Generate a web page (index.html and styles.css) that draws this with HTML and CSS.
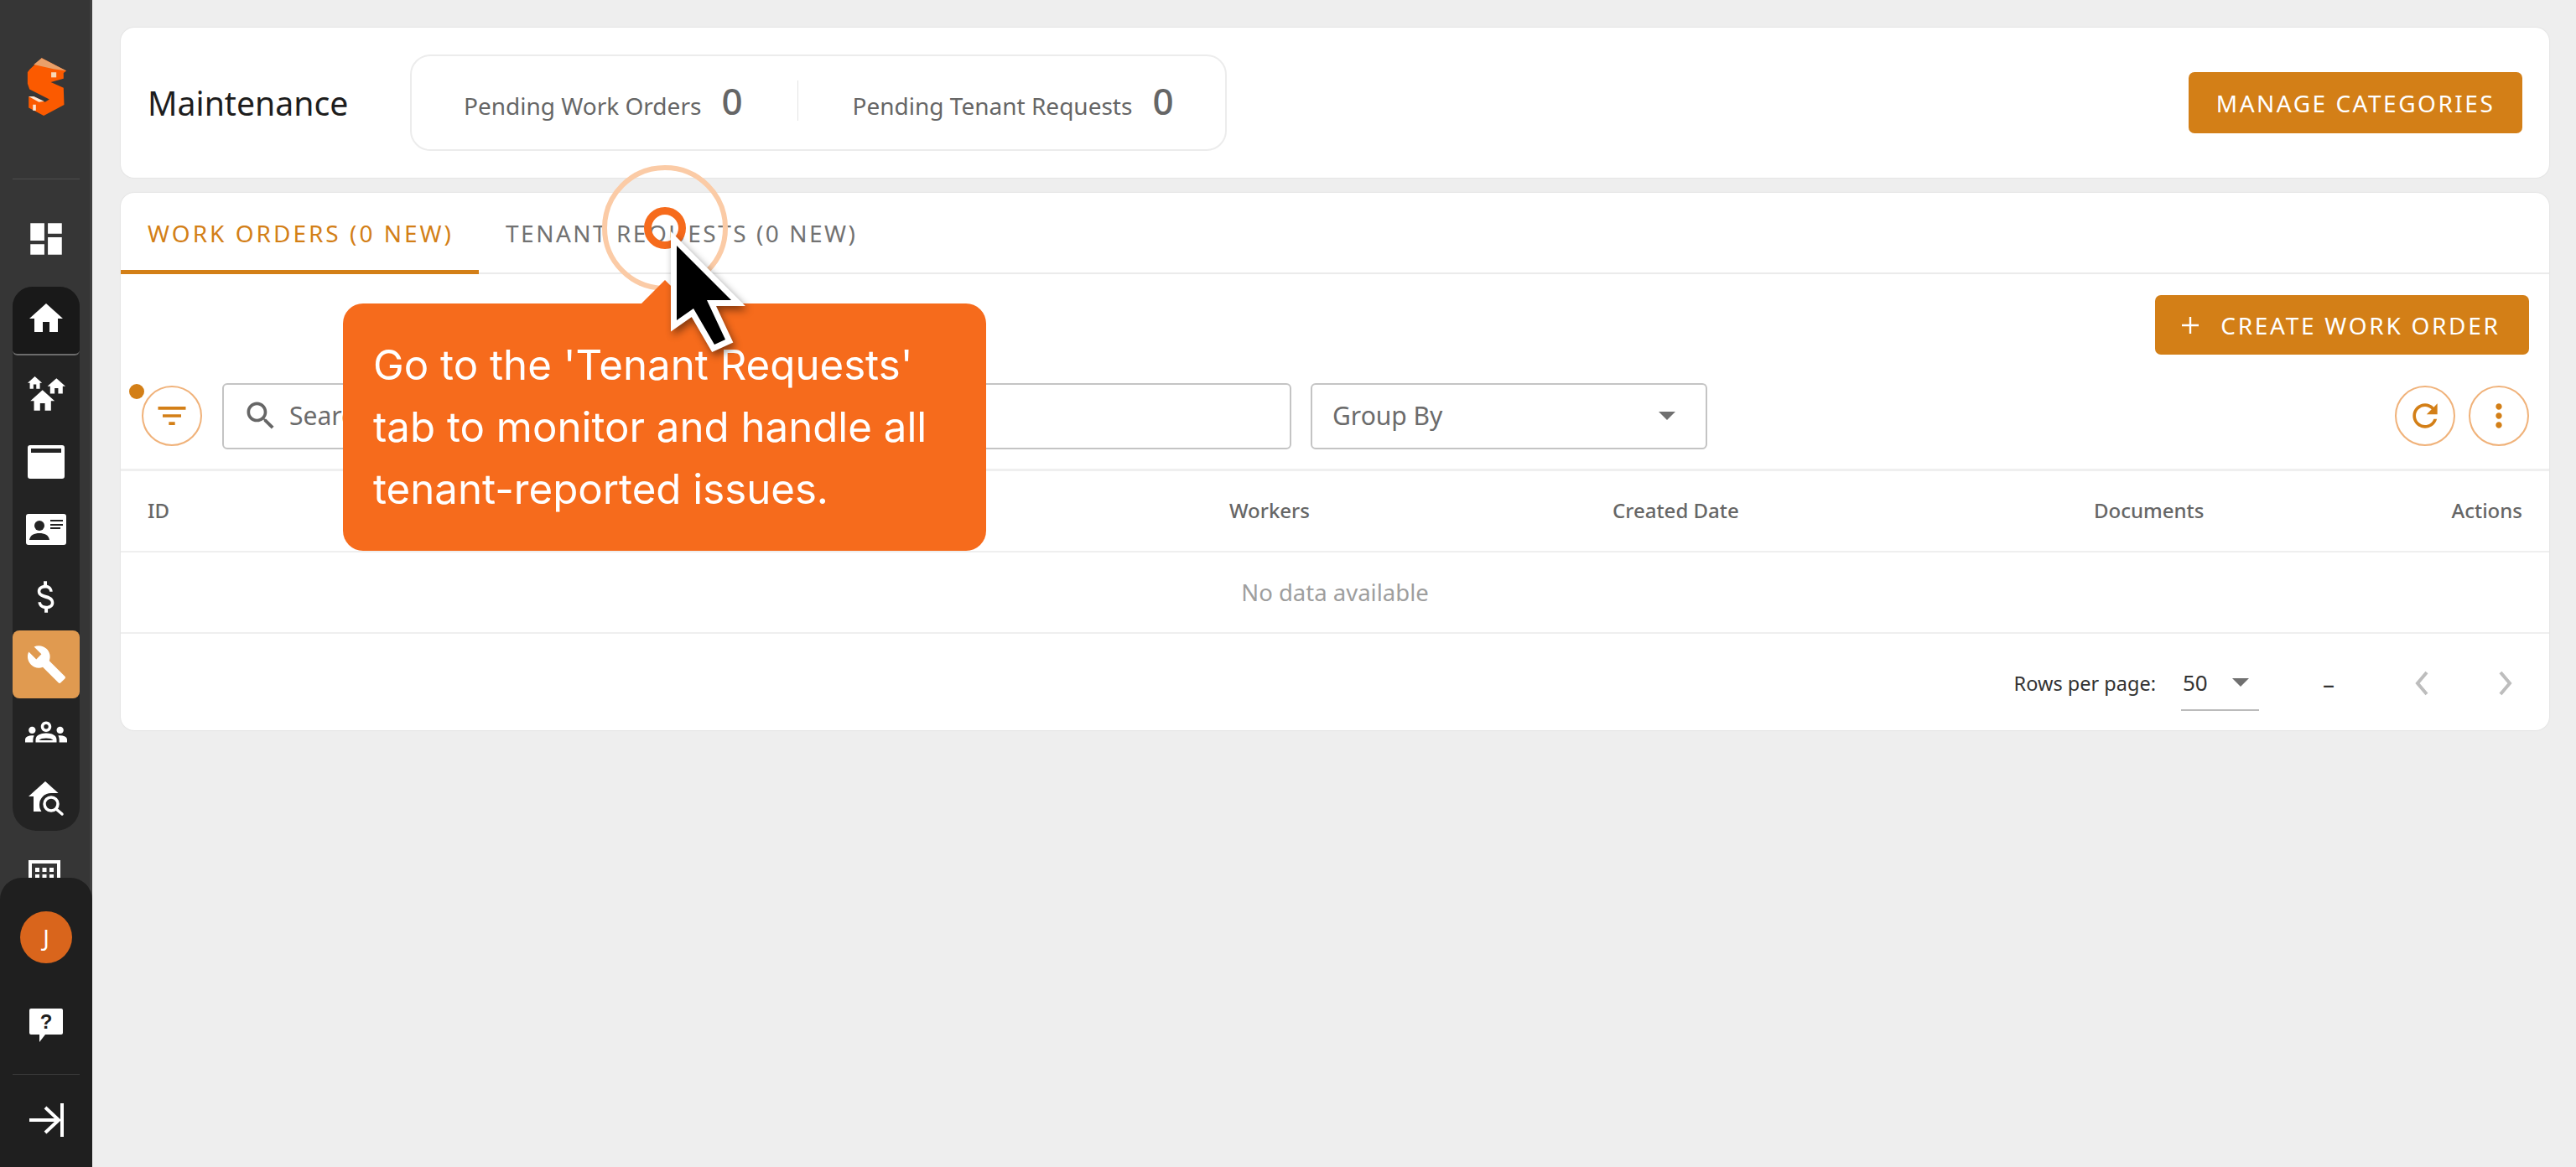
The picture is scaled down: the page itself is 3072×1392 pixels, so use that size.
FILE: index.html
```html
<!DOCTYPE html>
<html lang="en">
<head>
  <meta charset="UTF-8">
  <title>Maintenance</title>
  <link rel="stylesheet" href="styles.css">
</head>
<body>
  <div class="app">
    <aside class="sidebar">
      <div class="logo">
        <svg width="48" height="69" viewBox="0 0 47 68">
          <path fill="#fb5a00" d="M17.3 .3 L46.3 15.3 L43 17.7 V24.3 L28 28.7 L43 35.3 L43.7 55.3 L19.7 68 L2 58.7 V45.3 H8 L21.3 52 L26.3 48.7 L3 37 L.7 30.3 V17 L3 13.7 Z"/>
          <path fill="#e9a06a" d="M17.3 .3 L46.3 15.3 L31 13 L8 8 Z"/>
          <rect x="28.5" y="17" width="6" height="6" fill="#f8d9b8"/>
          <path fill="#fbe6d4" d="M2 45.3 H8 L20 51 L14 52 Z"/>
          <rect x="7" y="55" width="3.5" height="7" fill="#fbe6d4"/>
        </svg>
      </div>
      <div class="side-divider"></div>
      <div class="top-item">
        <svg class="icon" width="50" height="50" viewBox="0 0 24 24"><path d="M3 13h8V3H3v10zm0 8h8v-6H3v6zm10 0h8V11h-8v10zm0-18v6h8V3h-8z"/></svg>
      </div>
      <nav class="nav-group">
        <div class="nav-item home-item">
          <svg class="icon" width="48" height="48" viewBox="0 0 24 24"><path d="M10 20v-6h4v6h5v-8h3L12 3 2 12h3v8z"/></svg>
        </div>
        <div class="nav-list">
          <div class="nav-item">
            <svg class="icon" width="45" height="43" viewBox="0 0 42 40">
              <path transform="translate(-1.6 -2.4) scale(.8)" d="M10 20v-6h4v6h5v-8h3L12 3 2 12h3v8z"/>
              <path transform="translate(20 -1)" d="M10 20v-6h4v6h5v-8h3L12 3 2 12h3v8z"/>
              <path transform="translate(.3 10.95) scale(1.35)" d="M10 20v-6h4v6h5v-8h3L12 3 2 12h3v8z"/>
            </svg>
          </div>
          <div class="nav-item">
            <svg class="icon" width="46" height="42" viewBox="0 0 46 42"><path fill-rule="evenodd" d="M4 1 H42 Q45 1 45 4 V38 Q45 41 42 41 H4 Q1 41 1 38 V4 Q1 1 4 1 Z M5 5 V10 H41 V5 Z"/></svg>
          </div>
          <div class="nav-item">
            <svg class="icon" width="50" height="40" viewBox="0 0 50 40">
              <rect x="1" y="2" width="48" height="37" rx="3"/>
              <circle cx="17" cy="16" r="6" fill="#232323"/>
              <path fill="#232323" d="M5 33 C6 27 11 25 17 25 C23 25 28 27 29 33 Z"/>
              <path fill="none" stroke="#232323" stroke-width="2" d="M30 10 H45 M30 15 H45 M30 19 H42"/>
            </svg>
          </div>
          <div class="nav-item">
            <svg class="icon" width="50" height="50" viewBox="0 0 24 24"><path d="M11.8 10.9c-2.27-.59-3-1.2-3-2.15 0-1.09 1.01-1.85 2.7-1.85 1.78 0 2.44.85 2.5 2.1h1.7c-.07-1.72-1.12-3.3-3.21-3.81V3h-1.9v2.16c-1.94.42-3.5 1.68-3.5 3.61 0 2.31 1.91 3.46 4.7 4.13 2.5.6 3 1.48 3 2.41 0 .69-.49 1.79-2.7 1.79-2.06 0-2.87-.92-2.98-2.1h-1.7c.12 2.19 1.76 3.42 3.68 3.83V21h1.9v-2.15c1.95-.37 3.5-1.5 3.5-3.55 0-2.84-2.43-3.81-4.7-4.4z"/></svg>
          </div>
          <div class="nav-item active">
            <svg class="icon" width="49" height="49" viewBox="0 0 24 24"><path d="M22.7 19l-9.1-9.1c.9-2.3.4-5-1.5-6.9-2-2-5-2.4-7.4-1.3L9 6 6 9 1.6 4.7C.4 7.1.9 10.1 2.9 12.1c1.9 1.9 4.6 2.4 6.9 1.5l9.1 9.1c.4.4 1 .4 1.4 0l2.3-2.3c.5-.4.5-1.1.1-1.4z"/></svg>
          </div>
          <div class="nav-item">
            <svg class="icon" width="50" height="50" viewBox="0 0 24 24">
              <path d="M4 13c1.1 0 2-.9 2-2s-.9-2-2-2-2 .9-2 2 .9 2 2 2zM5.13 14.1C4.76 14.04 4.39 14 4 14c-.99 0-1.93.21-2.78.58C.48 14.9 0 15.62 0 16.43V18h4.5v-1.61c0-.83.23-1.61.63-2.29zM20 13c1.1 0 2-.9 2-2s-.9-2-2-2-2 .9-2 2 .9 2 2 2zM24 16.43c0-.81-.48-1.53-1.22-1.85C21.93 14.21 20.99 14 20 14c-.39 0-.76.04-1.13.1.4.68.63 1.46.63 2.29V18H24v-1.57zM16.24 13.65c-1.17-.52-2.61-.9-4.24-.9s-3.07.39-4.24.9C6.68 14.13 6 15.21 6 16.39V18h12v-1.61c0-1.18-.68-2.26-1.76-2.74zM12 6c1.66 0 3 1.34 3 3s-1.34 3-3 3-3-1.34-3-3 1.34-3 3-3z"/>
              <circle cx="12" cy="9" r="1.3" fill="#232323"/>
              <path fill="#232323" d="M8 16.8 C9 15.2 15 15.2 16 16.8 Z"/>
            </svg>
          </div>
          <div class="nav-item">
            <svg class="icon" width="44" height="42" viewBox="0 0 44 42">
              <path d="M21 0 L41 18 H36 V36 H7 V18 H1 Z"/>
              <circle cx="28" cy="28" r="14" fill="#232323"/>
              <path fill="#232323" d="M28 14 H44 V42 H18 V36 H28 Z"/>
              <circle cx="28" cy="27" r="8" fill="none" stroke="#fff" stroke-width="3.5"/>
              <path fill="none" stroke="#fff" stroke-width="3.5" stroke-linecap="round" d="M34 33 L41 39"/>
            </svg>
          </div>
          <div class="nav-item building-item">
            <svg class="icon" width="38" height="40" viewBox="0 0 38 40">
              <path fill-rule="evenodd" d="M0 0 H38 V40 H0 Z M4 4 V40 H34 V4 Z"/>
              <path d="M8 9h5v5H8zM16.500 9h5v5h-5zM25 9h5v5h-5zM8 17h5v5H8zM16.500 17h5v5h-5zM25 17h5v5h-5z"/>
            </svg>
          </div>
        </div>
      </nav>
      <div class="side-bottom">
        <div class="avatar">J</div>
        <svg class="icon help" width="42" height="44" viewBox="0 0 42 44">
          <path d="M3 1 H39 Q41 1 41 3 V30 Q41 32 39 32 H20 L13 41 L13 32 H3 Q1 32 1 30 V3 Q1 1 3 1 Z"/>
          <text x="21" y="25" text-anchor="middle" class="help-mark">?</text>
        </svg>
        <div class="bottom-divider"></div>
        <svg class="icon expand" width="42" height="42" viewBox="0 0 42 42">
          <path fill="none" stroke="#fff" stroke-width="4" d="M40 1 V41 M1 21 H36 M20 6 L36 21 L20 36"/>
        </svg>
      </div>
    </aside>

    <main class="content">
      <section class="card header-card">
        <h1 class="page-title">Maintenance</h1>
        <div class="stats">
          <div class="stat"><span class="stat-label">Pending Work Orders</span><span class="stat-value">0</span></div>
          <div class="stat-line"></div>
          <div class="stat"><span class="stat-label">Pending Tenant Requests</span><span class="stat-value">0</span></div>
        </div>
        <button class="btn manage-btn">MANAGE CATEGORIES</button>
      </section>

      <section class="card list-card">
        <div class="tabs">
          <div class="tab tab-active">WORK ORDERS (0 NEW)</div>
          <div class="tab">TENANT REQUESTS (0 NEW)</div>
        </div>
        <div class="create-row">
          <button class="btn create-btn">
            <svg width="24" height="24" viewBox="0 0 24 24"><path fill="none" stroke="#fff" stroke-width="2.4" d="M12 2 V22 M2 12 H22"/></svg>
            CREATE WORK ORDER
          </button>
        </div>
        <div class="filter-row">
          <div class="filter-wrap">
            <span class="filter-dot"></span>
            <button class="round-btn">
              <svg width="44" height="44" viewBox="0 0 24 24"><path d="M10 18h4v-2h-4v2zM3 6v2h18V6H3zm3 7h12v-2H6v2z"/></svg>
            </button>
          </div>
          <div class="field search-field">
            <svg width="44" height="44" viewBox="0 0 24 24"><path d="M15.5 14h-.79l-.28-.27C15.41 12.59 16 11.11 16 9.5 16 5.91 13.09 3 9.5 3S3 5.91 3 9.5 5.91 16 9.5 16c1.61 0 3.09-.59 4.23-1.57l.27.28v.79l5 4.99L20.49 19l-4.99-5zm-6 0C7.01 14 5 11.99 5 9.5S7.01 5 9.5 5 14 7.01 14 9.5 11.99 14 9.5 14z"/></svg>
            <span>Search</span>
          </div>
          <div class="field group-field">
            <span>Group By</span>
            <span class="caret"></span>
          </div>
          <div class="row-actions">
            <button class="round-btn">
              <svg width="44" height="44" viewBox="0 0 24 24"><path d="M17.65 6.35C16.2 4.9 14.21 4 12 4c-4.42 0-7.99 3.58-7.99 8s3.57 8 7.99 8c3.73 0 6.84-2.55 7.73-6h-2.08c-.82 2.33-3.04 4-5.65 4-3.31 0-6-2.69-6-6s2.69-6 6-6c1.66 0 3.14.69 4.22 1.78L13 11h7V4l-2.35 2.35z"/></svg>
            </button>
            <button class="round-btn">
              <svg width="44" height="44" viewBox="0 0 24 24"><path d="M12 8c1.1 0 2-.9 2-2s-.9-2-2-2-2 .9-2 2 .9 2 2 2zm0 2c-1.1 0-2 .9-2 2s.9 2 2 2 2-.9 2-2-.9-2-2-2zm0 6c-1.1 0-2 .9-2 2s.9 2 2 2 2-.9 2-2-.9-2-2-2z"/></svg>
            </button>
          </div>
        </div>
        <div class="table-head">
          <div>ID</div>
          <div>Workers</div>
          <div>Created Date</div>
          <div>Documents</div>
          <div class="col-right">Actions</div>
        </div>
        <div class="table-empty">No data available</div>
        <div class="pager">
          <span class="pager-label">Rows per page:</span>
          <div class="pager-select"><span>50</span><span class="caret"></span></div>
          <span class="pager-range">–</span>
          <svg class="chev" width="20" height="32" viewBox="0 0 20 32"><path fill="none" stroke="#bdbdbd" stroke-width="4" d="M16 3 L5 16 L16 29"/></svg>
          <svg class="chev" width="20" height="32" viewBox="0 0 20 32"><path fill="none" stroke="#bdbdbd" stroke-width="4" d="M4 3 L15 16 L4 29"/></svg>
        </div>
      </section>
    </main>
  </div>

  <div class="tour-ring"></div>
  <div class="tour-dot"></div>
  <div class="tour-tip">
    <span class="tour-arrow"></span>
    Go to the 'Tenant Requests' tab to monitor and handle all tenant-reported issues.
  </div>
  <svg class="tour-cursor" width="110" height="160" viewBox="0 0 110 160">
    <path class="cursor-shape" d="M17 23 L82 88 H53 L75 135 L62 141 L37 98 L17 112 Z"/>
  </svg>
</body>
</html>
```
FILE: styles.css
```css
* {
  box-sizing: border-box;
}
html, body {
  height: 100%;
}
body {
  margin: 0;
  background-color: #eeeeee;
  font-family: "Noto Sans", "Open Sans", sans-serif;
  overflow: hidden;
}
button {
  font-family: inherit;
  border: none;
  padding: 0;
}
.app {
  display: flex;
  height: 1392px;
}

/* sidebar */
.sidebar {
  position: relative;
  width: 110px;
  height: 100%;
  flex-shrink: 0;
  overflow: hidden;
  background-color: #363636;
  box-shadow: inset -3px 0 0 #3f3f3f;
}
.icon {
  fill: #fff;
  display: block;
}
.logo {
  height: 213px;
  padding: 69px 0 0 32px;
}
.side-divider {
  height: 1px;
  margin: 0 15px;
  background-color: #4d4d4d;
}
.top-item {
  height: 128px;
  padding-top: 14px;
  display: flex;
  align-items: center;
  justify-content: center;
}
.nav-group {
  width: 80px;
  margin-left: 15px;
  height: 649px;
  background-color: #232323;
  border-radius: 24px 24px 28px 28px;
}
.nav-item {
  height: 80.5px;
  display: flex;
  align-items: center;
  justify-content: center;
}
.home-item {
  height: 82px;
  padding-bottom: 4px;
  border-radius: 24px 24px 6px 6px;
  background-color: #191919;
  border-bottom: 2px solid #6c6c6c;
}
.nav-list {
  padding-top: 6px;
}
.nav-item.active {
  background-color: #e09a50;
  border-radius: 8px;
}
.building-item {
  padding: 25px 4px 0 0;
}
.side-bottom {
  position: absolute;
  left: 0;
  bottom: 0;
  width: 110px;
  height: 345px;
  display: flex;
  flex-direction: column;
  align-items: center;
  background-color: #1f1f1f;
  border-radius: 26px 26px 0 0;
}
.avatar {
  width: 62px;
  height: 62px;
  margin-top: 40px;
  border-radius: 50%;
  background-color: #d9651c;
  color: #fff;
  font-size: 28px;
  display: flex;
  align-items: center;
  justify-content: center;
}
.help {
  margin-top: 53px;
  overflow: visible;
}
.help-mark {
  fill: #1f1f1f;
  font-family: "Liberation Sans", sans-serif;
  font-weight: 700;
  font-size: 24px;
}
.bottom-divider {
  width: 80px;
  height: 1px;
  margin-top: 35px;
  background-color: #3a3a3a;
}
.expand {
  margin-top: 33px;
}

/* main */
.content {
  flex: 1;
  padding: 33px 32px 0 34px;
  min-width: 0;
}
.card {
  background-color: #fff;
  border-radius: 16px;
  box-shadow: 0 0 2px rgba(0, 0, 0, 0.12);
}
.header-card {
  height: 179px;
  padding: 0 32px;
  display: flex;
  align-items: center;
}
.page-title {
  margin: 0;
  width: 313px;
  font-size: 39.2px;
  font-weight: 400;
  color: #1d1d1d;
}
.stats {
  width: 974px;
  height: 115px;
  padding: 0 0 5px 62px;
  display: flex;
  align-items: center;
  gap: 65px;
  border: 2px solid #ececec;
  border-radius: 24px;
}
.stat {
  display: flex;
  align-items: baseline;
}
.stat-label {
  font-size: 28px;
  color: #666;
}
.stat-value {
  margin-left: 24px;
  font-size: 44px;
  font-weight: 500;
  color: #666;
}
.stat-line {
  width: 1px;
  height: 48px;
  background-color: #e4e4e4;
}
.btn {
  background-color: #d37f17;
  color: #fff;
  border-radius: 7px;
  font-size: 28px;
  letter-spacing: 2.5px;
}
.manage-btn {
  margin-left: auto;
  width: 398px;
  height: 73px;
}
.list-card {
  margin-top: 18px;
  height: 641px;
}
.tabs {
  height: 97px;
  display: flex;
  border-bottom: 2px solid #ebebeb;
}
.tab {
  height: 97px;
  padding: 0 32px;
  line-height: 96px;
  font-size: 28px;
  letter-spacing: 2.5px;
  color: #727272;
}
.tab-active {
  padding-right: 30px;
  letter-spacing: 3px;
  color: #d37f17;
  border-bottom: 5px solid #d37f17;
}
.create-row {
  display: flex;
  justify-content: flex-end;
  padding: 25px 24px 0 0;
}
.create-btn {
  width: 446px;
  height: 71px;
  padding-right: 4px;
  display: flex;
  align-items: center;
  justify-content: center;
  gap: 24px;
  letter-spacing: 2.7px;
}
.filter-row {
  height: 139px;
  padding: 37px 24px 0 25px;
  display: flex;
  align-items: flex-start;
  border-bottom: 3px solid #efefef;
}
.filter-wrap {
  position: relative;
}
.filter-dot {
  position: absolute;
  left: -15px;
  top: -2px;
  width: 18px;
  height: 18px;
  border-radius: 50%;
  background-color: #d37f17;
}
.round-btn {
  width: 72px;
  height: 72px;
  border-radius: 50%;
  background-color: #fff;
  border: 2px solid #f0b27a;
  display: flex;
  align-items: center;
  justify-content: center;
}
.round-btn svg {
  fill: #d37f17;
}
.field {
  height: 79px;
  margin-top: -3px;
  padding-bottom: 2px;
  border: 2px solid #c4c4c4;
  border-radius: 6px;
  display: flex;
  align-items: center;
  font-size: 30px;
  color: #6b6b6b;
}
.search-field {
  width: 1275px;
  margin-left: 24px;
  padding-left: 22px;
  gap: 12px;
}
.search-field svg {
  fill: #666;
}
.group-field {
  width: 473px;
  margin-left: 23px;
  padding: 0 36px 2px 24px;
  justify-content: space-between;
}
.caret {
  width: 0;
  height: 0;
  border-left: 10px solid transparent;
  border-right: 10px solid transparent;
  border-top: 10px solid #707070;
}
.row-actions {
  margin-left: auto;
  display: flex;
  gap: 16px;
}
.table-head {
  height: 97px;
  padding: 0 32px 3px;
  display: grid;
  grid-template-columns: 1290px 457px 574px 1fr auto;
  align-items: center;
  font-size: 24px;
  font-weight: 500;
  color: #666;
  border-bottom: 2px solid #efefef;
}
.col-right {
  text-align: right;
}
.table-empty {
  height: 97px;
  display: flex;
  align-items: center;
  justify-content: center;
  font-size: 27.5px;
  color: #9e9e9e;
  border-bottom: 2px solid #efefef;
}
.pager {
  height: 117px;
  padding-right: 42px;
  display: flex;
  align-items: center;
  justify-content: flex-end;
  font-size: 23.5px;
  color: #333;
}
.pager-select {
  width: 93px;
  height: 66px;
  margin-left: 30px;
  padding: 0 12px 0 2px;
  display: flex;
  align-items: center;
  justify-content: space-between;
  border-bottom: 2px solid #bbb;
  font-size: 26px;
}
.pager-range {
  margin-left: 76px;
  margin-right: 94px;
  font-size: 28px;
}
.chev + .chev {
  margin-left: 80px;
}

/* tour overlay */
.tour-ring {
  position: absolute;
  left: 718px;
  top: 197px;
  width: 150px;
  height: 150px;
  border: 6px solid #fbcba6;
  border-radius: 50%;
}
.tour-dot {
  position: absolute;
  left: 768px;
  top: 247px;
  width: 50px;
  height: 50px;
  border: 9px solid #f66b1c;
  border-radius: 50%;
}
.tour-tip {
  position: absolute;
  left: 409px;
  top: 362px;
  width: 767px;
  height: 295px;
  padding: 36px 36px 0;
  background-color: #f66b1c;
  border-radius: 24px;
  color: #fff;
  font-family: Inter, sans-serif;
  font-size: 49.2px;
  line-height: 74px;
}
.tour-arrow {
  position: absolute;
  left: 356px;
  top: -28px;
  width: 0;
  height: 0;
  border-left: 28px solid transparent;
  border-right: 28px solid transparent;
  border-bottom: 28px solid #f66b1c;
}
.tour-cursor {
  position: absolute;
  left: 790px;
  top: 270px;
  filter: drop-shadow(3px 5px 5px rgba(0, 0, 0, 0.45));
}
.cursor-shape {
  fill: #000;
  stroke: #fff;
  stroke-width: 14px;
  stroke-linejoin: miter;
  paint-order: stroke;
}
```
